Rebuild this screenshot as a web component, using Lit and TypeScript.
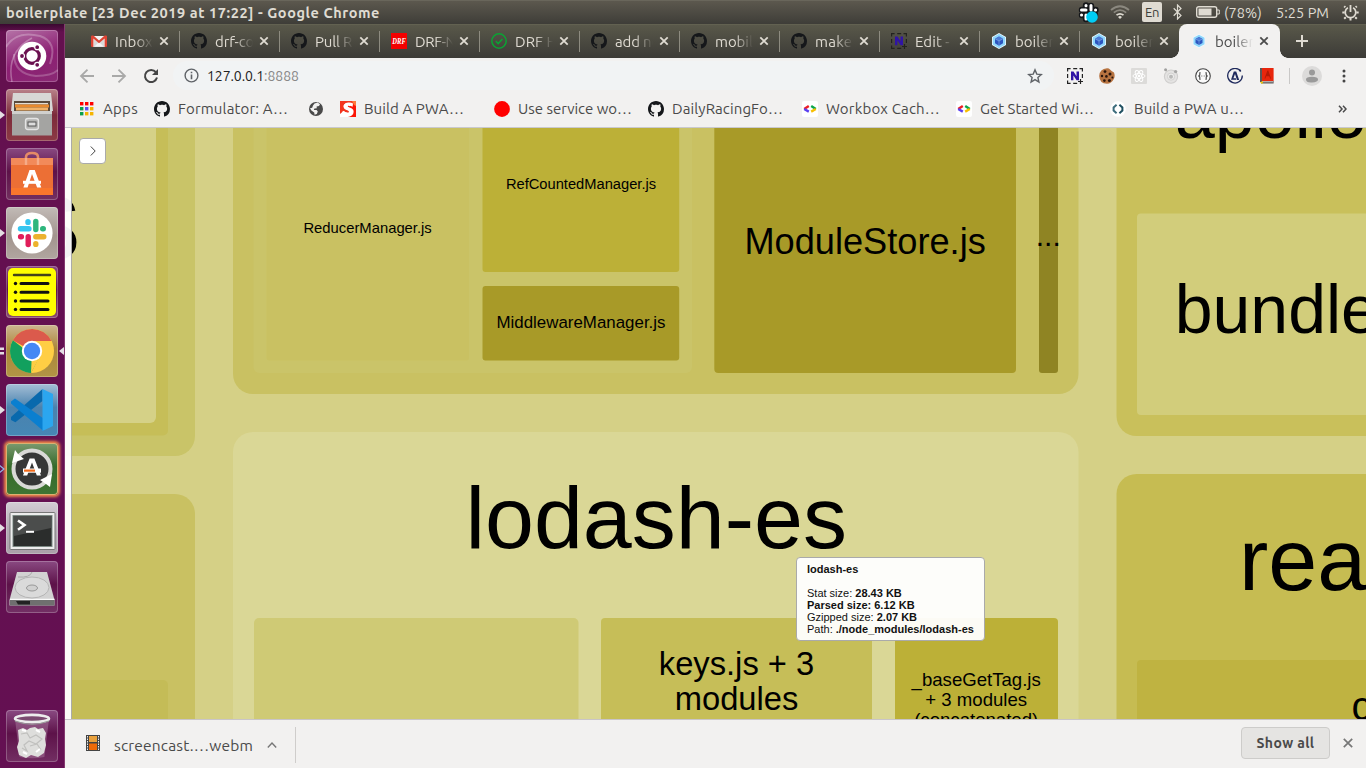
import { LitElement, html, svg, css, nothing, TemplateResult } from "lit";
import { customElement, property } from "lit/decorators.js";

/** A line of text whose tracking is adjusted so that it spans a given width. */
@customElement("fit-text")
class FitText extends LitElement {
  @property({ type: Number }) width = 0;
  @property() text = "";
  static styles = css`
    :host { display: inline-block; white-space: pre; flex: none; }
    .t { display: inline-block; white-space: pre; }
  `;
  render() {
    return html`<span class="t">${this.text}</span>`;
  }
  updated() {
    const t = this.renderRoot.querySelector(".t") as HTMLElement;
    t.style.letterSpacing = "0";
    const natural = t.getBoundingClientRect().width;
    const gap = (this.width - natural) / this.text.length;
    t.style.letterSpacing = `${gap.toFixed(3)}px`;
  }
}

const fit = (text: string, width: number) => html`<fit-text .text=${text} .width=${width}></fit-text>`;

const OCTOCAT =
  "M8 0C3.58 0 0 3.58 0 8c0 3.54 2.29 6.53 5.47 7.59.4.07.55-.17.55-.38 0-.19-.01-.82-.01-1.49-2.01.37-2.53-.49-2.69-.94-.09-.23-.48-.94-.82-1.13-.28-.15-.68-.52-.01-.53.63-.01 1.08.58 1.23.82.72 1.21 1.87.87 2.33.66.07-.52.28-.87.51-1.07-1.78-.2-3.64-.89-3.64-3.95 0-.87.31-1.59.82-2.15-.08-.2-.36-1.02.08-2.12 0 0 .67-.21 2.2.82.64-.18 1.32-.27 2-.27s1.36.09 2 .27c1.53-1.04 2.2-.82 2.2-.82.44 1.1.16 1.92.08 2.12.51.56.82 1.27.82 2.15 0 3.07-1.87 3.75-3.65 3.95.29.25.54.73.54 1.48 0 1.07-.01 1.93-.01 2.2 0 .21.15.46.55.38A8.01 8.01 0 0 0 16 8c0-4.42-3.58-8-8-8z";

const icon16 = (body: unknown) => html`<svg class="i16" viewBox="0 0 16 16">${body}</svg>`;

const github = () => icon16(svg`<path fill="#15171a" d=${OCTOCAT}></path>`);
const gmail = () =>
  icon16(svg`<path fill="#f2f2f2" d="M1 3h14v11H1z"></path><path fill="#d9d9d9" d="M3 14V6l5 4 5-4v8z"></path>
    <path fill="#f5f5f5" d="M3.5 13.5 8 9l4.5 4.5z"></path>
    <path fill="#dd4333" d="M1 2.6h1.4L8 7.4l5.6-4.8H15q1 0 1 1V13q0 1-1 1h-1.4V5.6L8 10.3 2.4 5.6V14H1q-1 0-1-1V3.6q0-1 1-1z"></path>`);
const drf = () =>
  icon16(svg`<rect width="16" height="16" fill="#f40000"></rect>
    <text x="1.3" y="10.8" font-family="Liberation Serif, serif" font-style="italic" font-weight="700" font-size="7.6" fill="#fff" textLength="13.6" lengthAdjust="spacingAndGlyphs">DRF</text>`);
const check = () =>
  icon16(svg`<circle cx="8" cy="8" r="7.2" fill="none" stroke="#0ba334" stroke-width="1.5"></circle>
    <path d="M4.8 8.2 7.2 10.5 11.4 6" fill="none" stroke="#0ba334" stroke-width="1.6"></path>`);
const nimbus = (frame = "#222") =>
  icon16(svg`<path d="M.6 3.5V.6h3M6.2.6h4M12.5.6h2.9v3M15.4 6v4M.6 6v4M.6 12.5v2.9h3M6.2 15.4h4" fill="none" stroke=${frame} stroke-width="1.2"></path>
    <path d="M4 12.2V3.6h2.5l3 4.7V3.6H12v8.6H9.6L6.4 7.4v4.8z" fill="#3014a5"></path>
    <path d="M11 13.5h5M13.5 11v5" stroke=${frame} stroke-width="1.2"></path>`);
const webpack = () =>
  icon16(svg`<path d="M8 0 15 4v8L8 16 1 12V4z" fill="#f4fbff"></path><path d="M8 .8 14.3 4.4v7.2L8 15.2 1.7 11.6V4.4z" fill="#8ed6fb"></path>
    <path d="M8 3.4 12 5.700v4.600L8 12.700 4 10.300V5.700z" fill="#2c55c0"></path>
    <path d="M8 3.4 12 5.700 8 8 4 5.700z" fill="#4b7bd6"></path><path d="M8 8v4.5M8 8 4.1 5.8M8 8l3.9-2.2" stroke="#b9e4fd" stroke-width=".4"></path>`);
const apps = () => {
  const c = ["#f00", "#f00", "#f00", "#0a9f4b", "#5a50ee", "#f5b400", "#0a9f4b", "#f5b400", "#f5b400"];
  return icon16(c.map((f, i) => svg`<rect x=${1 + (i % 3) * 5} y=${1 + Math.floor(i / 3) * 5} width="3.4" height="3.4" fill=${f}></rect>`));
};
const globe = () =>
  icon16(svg`<circle cx="8" cy="8" r="7" fill="#4a4a4a"></circle>
    <path d="M6.5 2.6 9.6 1.6 12 3.2 11 5 8.6 5.4 8.8 7.2 6.4 7.6 5.8 9H8.6L9.8 10.4 8.8 13 6.6 13.8 6.2 11.4 3.4 9.6 2 7.2 4.2 6.8 5 4.4z" fill="#f2f1f0"></path>`);
const smashing = () =>
  icon16(svg`<path d="M0 0H16V16H0z" fill="#fff"></path><path d="M0 0H16L13 5.800 12.400 3.200Q8.500 1 5.600 2.600 2.400 4.800 4.600 7.400 5.600 8.400 8.600 9.200 10.200 10 9 11.400 6.800 12.600 3.600 10L0 13z" fill="#f3351f"></path>
    <path d="M9.800 5.200Q8 4 7.600 5.200 8 6.200 11 7 14.400 8.600 13.400 12.200 12 15.400 8 16H16V0z" fill="#fb1606"></path><path d="M12 0h4v5l-2-1z" fill="#ff7a3c"></path>
    <path d="M13 2.400 12.600 5.800Q9 4 7.400 4.800 6.800 6 10 7.200 13.800 8.600 12.800 12 11.400 15 7 14.800 4 14.600 1.400 13L3 9.800Q6.800 12.400 8.800 11.400 9.600 10 6.600 9 3 7.800 3.600 4.600 5 1.200 9 1.400 11.400 1.600 13 2.400z" fill="#fff"></path>`);
const youtubeDot = () => icon16(svg`<circle cx="8" cy="8" r="7.9" fill="#f00"></circle>`);
const devsite = () =>
  icon16(svg`<rect width="16" height="16" rx="2" fill="#fff"></rect>
    <g fill="none" stroke-width="2.4"><path d="M6.8 5 2.200 8" stroke="#ee1d23"></path><path d="M2.200 8 6.8 10.600" stroke="#5a3ff0"></path>
    <path d="M9.2 5 13.800 8" stroke="#0aa64b"></path><path d="M13.800 8 9.2 10.600" stroke="#f7bf00"></path></g>`);
const codelab = () =>
  icon16(svg`<circle cx="8" cy="8" r="7.8" fill="#fff"></circle><path d="M6.6 3.8 3.6 6.400v3.200l3 2.600" fill="none" stroke="#3d6c7c" stroke-width="2"></path><path d="M9.4 3.8 12.4 6.400v3.200l-3 2.600" fill="none" stroke="#1f4f60" stroke-width="2"></path>`);
const cookie = () =>
  icon16(svg`<path d="M8 .3Q10 .2 11 1.6L12.6 3 15 4.4Q16.4 8 14.8 11 12.4 15.8 8 15.8.4 15.4.2 8 .6.8 8 .3z" fill="#b77340"></path>
    <g fill="#2a160d"><circle cx="6" cy="3.6" r="1.4"></circle><circle cx="11" cy="6" r="1.5"></circle><circle cx="3" cy="8" r="1.2"></circle><circle cx="7.4" cy="8.4" r="1.3"></circle><circle cx="5.4" cy="12.6" r="1.3"></circle><circle cx="10.4" cy="12.4" r="1.5"></circle><circle cx="13.4" cy="9.4" r="1"></circle></g>`);
const reactExt = () =>
  icon16(svg`<rect width="16" height="16" rx="1" fill="#dcdbd9"></rect><g fill="none" stroke="#fff" stroke-width="1"><ellipse cx="8" cy="8" rx="6" ry="2.4"></ellipse><ellipse cx="8" cy="8" rx="6" ry="2.4" transform="rotate(60 8 8)"></ellipse><ellipse cx="8" cy="8" rx="6" ry="2.4" transform="rotate(120 8 8)"></ellipse></g><circle cx="8" cy="8" r="1.3" fill="#fff"></circle>`);
const orbit = () =>
  icon16(svg`<circle cx="8" cy="8.6" r="6.6" fill="#e4e3e2" stroke="#cfcecd" stroke-width="1.1"></circle><circle cx="8" cy="8.6" r="3.6" fill="#ededec" stroke="#d2d1d0"></circle><circle cx="8" cy="8.8" r="2" fill="#b9b9b8"></circle><circle cx="2.6" cy="1.8" r="1.5" fill="#a0a09f"></circle><circle cx="12.6" cy="3.6" r="1.7" fill="#a6a6a5"></circle>`);
const braces = () =>
  icon16(svg`<circle cx="8" cy="8" r="7.3" fill="#fafafa" stroke="#444" stroke-width="1.1"></circle>
    <path d="M5.600 4.800H4.800V7L3.800 8l1 1v2.200h.8M10.400 4.800h.8V7l1 1-1 1v2.200h-.8" fill="none" stroke="#444" stroke-width="1.100"></path><path d="M6.300 7.600h1v1h-1zM8.700 7.600h1v1h-1z" fill="#666"></path>`);
const apollo = () =>
  icon16(svg`<path d="M13.9 3.4A7.3 7.3 0 1 0 15.3 7.6" fill="none" stroke="#1f2a5c" stroke-width="1.3"></path><circle cx="13" cy="2.6" r="1" fill="#1f2a5c"></circle>
    <path d="M6.8 3.6h2.4L12.2 12H10l-2-6-1.6 4.2H8.8l.5 1.6H4z" fill="#1f2a5c"></path>`);
const book = () =>
  icon16(svg`<path d="M1 0h13.600v13H1z" fill="#e8260c"></path><path d="M1 0h2v14H1z" fill="#5b5757"></path><path d="M2 13h12.6v2.5H2z" fill="#5f5a5a"></path><path d="M3 13.4h11v.8H3z" fill="#e6e6e6"></path><path d="M1 14.6 3.6 13v3z" fill="#ffd400"></path><path d="M8.4 2.600h.9L12 10.400h-.9l-.8-2.200H7.2l-.8 2.200H5.500z" fill="#b51a05"></path>`);

interface Tab { title: string; width: number; icon: () => TemplateResult; active?: boolean; }
const TABS: Tab[] = [
  { title: "Inbox (", width: 46, icon: gmail },
  { title: "drf-com", width: 52, icon: github },
  { title: "Pull Req", width: 54, icon: github },
  { title: "DRF-Nex", width: 56, icon: drf },
  { title: "DRF Ho", width: 51, icon: check },
  { title: "add new", width: 56, icon: github },
  { title: "mobile", width: 46, icon: github },
  { title: "make s", width: 48, icon: github },
  { title: "Edit - N", width: 49, icon: () => nimbus("#23231f") },
  { title: "boilerp", width: 48, icon: webpack },
  { title: "boilerp", width: 48, icon: webpack },
  { title: "boilerp", width: 48, icon: webpack, active: true },
];

interface Bookmark { label: string; width: number; slot: number; icon: () => TemplateResult; }
const BOOKMARKS: Bookmark[] = [
  { label: "Apps", width: 35, slot: 75, icon: apps },
  { label: "Formulator: A…", width: 110, slot: 154, icon: github },
  { label: "", width: 0, slot: 32, icon: globe },
  { label: "Build A PWA…", width: 100, slot: 154, icon: smashing },
  { label: "Use service wo…", width: 114, slot: 154, icon: youtubeDot },
  { label: "DailyRacingFo…", width: 111, slot: 154, icon: github },
  { label: "Workbox Cach…", width: 114, slot: 154, icon: devsite },
  { label: "Get Started Wi…", width: 114, slot: 154, icon: devsite },
  { label: "Build a PWA u…", width: 110, slot: 154, icon: codelab },
];

/* ---------- launcher artwork, drawn on a 52 × 52 tile ---------- */
const art = {
  dash: svg`<g fill="none" stroke="#fff"><path d="M0 17Q10 0 34 6 52 12 44 34" opacity=".25" stroke-width="2"></path><path d="M6 52Q0 22 26 8" opacity=".3" stroke-width="1.5"></path><path d="M8 24Q8 44 30 46 46 46 52 40" opacity=".22" stroke-width="2"></path></g>
    <circle cx="26" cy="26" r="14.3" fill="#fff"></circle><circle cx="26" cy="26" r="7.3" fill="none" stroke="#6b1050" stroke-width="3.2"></circle>
    <g stroke="#fff" stroke-width="1.2" fill="#6b1050"><circle cx="16" cy="26" r="2.5"></circle><circle cx="31.2" cy="17.2" r="2.5"></circle><circle cx="31.2" cy="34.8" r="2.5"></circle></g>`,
  files: svg`<path d="M7 4h38l2 18H5z" fill="#d7d7d5"></path><path d="M8 12h36v11H8z" fill="#5a4a3c"></path><path d="M9 14h33v1.600H9z" fill="#e2ddd5"></path><path d="M9 15.500h34v3H9z" fill="#e98a2e"></path><path d="M10 18.500h32v3H10z" fill="#f2b268"></path>
    <path d="M6 22h40v24.5H6z" fill="#a4a4a2"></path><path d="M6 22h40v3H6z" fill="#d0d0ce"></path><rect x="19.500" y="29.500" width="13" height="11" rx="2.5" fill="#b5b5b3" stroke="#e4e4e4" stroke-width="1.3"></rect><rect x="22" y="33" width="8" height="4" fill="#ddd" stroke="#555"></rect>`,
  software: svg`<path d="M20 17V9q0-4 6-4t6 4v8" fill="none" stroke="#e58a66" stroke-width="2.6"></path><path d="M5 10h42v37H5z" fill="#ec6f35"></path><path d="M5 10h42v7H5z" fill="#f28a5a"></path><path d="M5 40h42v7H5z" fill="#f9762c"></path><path d="M20 10v7M32 10v7" stroke="#f6ab88" stroke-width="2.400"></path>
    <path d="M23.5 22h5.2l6.6 17.5h-4.2L26 26l-4.4 13.5h-4.2z" fill="#fff"></path><path d="M17 32.8h18v3H17z" fill="#fff"></path>`,
  slack: svg`<circle cx="26" cy="26" r="20.6" fill="#fff"></circle>
    <g stroke-width="5.4" stroke-linecap="round"><path d="M14.5 21.8h8.4" stroke="#36c5f0"></path><path d="M22 14.6v.8" stroke="#36c5f0"></path><path d="M29.8 14.4v8.2" stroke="#2eb67d"></path><path d="M36.7 21.8h.6" stroke="#2eb67d"></path>
    <path d="M29.8 29.8h8" stroke="#ecb22e"></path><path d="M29.8 36.8v.6" stroke="#ecb22e"></path><path d="M22.2 29.8v7.8" stroke="#e01e5a"></path><path d="M14.6 29.8h.8" stroke="#e01e5a"></path></g>`,
  notes: svg`<rect x="2" y="2" width="48" height="48" rx="5" fill="#ff0"></rect><g stroke="#111" stroke-linecap="round" stroke-width="3"><path d="M8 9h36" stroke="#44441a" stroke-width="2.4"></path><path d="M15 17.5h27M15 26.3h27M15 35h27M15 43.4h27"></path></g>
    <g fill="#111"><circle cx="9.5" cy="17.5" r="1.7"></circle><circle cx="9.5" cy="26.3" r="1.7"></circle><circle cx="9.5" cy="35" r="1.7"></circle><circle cx="9.5" cy="43.4" r="1.7"></circle></g>`,
  chrome: svg`<circle cx="26" cy="26" r="22" fill="#ffce44"></circle><path d="M26 26 6.8 15.2A22 22 0 0 1 45.6 16H26z" fill="#db5a4c"></path>
    <path d="M26 26H46.2A22 22 0 0 0 45.6 16H26z" fill="#ffce44"></path><path d="M6.9 15.2A22 22 0 0 0 25 48l9-17.4-8-.6z" fill="#12a05e"></path><path d="M25 48 34.6 30.5 26 26z" fill="#ffce44"></path><circle cx="26" cy="26" r="10.2" fill="#fff"></circle><circle cx="26" cy="26" r="8.2" fill="#4688f4"></circle>`,
  code: svg`<path d="M36.500 15v22L5 36.500V33z" fill="#4686b5" opacity="0"></path><path d="M36.500 5 5 33v3l4.400 2.200L36.500 17z" fill="#0869ad"></path><path d="M5 17.500 9 14.500l28.500 20V47L5 19.600z" fill="#0a7fd0"></path><path d="M36.5 5 47 10v32l-10.500 5z" fill="#2ba6ef"></path>`,
  updater: svg`<circle cx="26" cy="26" r="18.500" fill="#363737" stroke="#d9d9d7" stroke-width="4"></circle><path d="M6 20 9 7l3 4 6 5z" fill="#fff"></path><path d="m46 31-2 13-4-3-6-4z" fill="#fff"></path>
    <path d="M23.600 15.500h4.800L35 32.500h-4.200L26 19.500l-4.800 13H17z" fill="#fff"></path><path d="M17 25.500h18v4.200H17z" fill="#fff"></path><path d="M18 26.500h11v2.200H18z" fill="#f26a1b"></path>`,
  terminal: svg`<rect x="4" y="10.500" width="45" height="37" rx="1" fill="#ededed" stroke="#777" stroke-width="1"></rect><rect x="7" y="13.500" width="39" height="31" fill="#2b2d2c" stroke="#7d8a84"></rect><path d="M8 14h37v12L8 34z" fill="#4b4d4c"></path><path d="m12 18.500 6.500 4.600-6.500 4.600" fill="none" stroke="#fff" stroke-width="2.600"></path><path d="M20 29.800h8" stroke="#fff" stroke-width="2"></path>`,
  disk: svg`<path d="M11 11h30l7.500 28v5.500h-45V39z" fill="#d2d2d2"></path><path d="M4 39h44.500v5.500H4z" fill="#6f6f6f"></path><path d="M10 40h14v3.500H12z" fill="#222"></path><path d="M4 38.400h44.500" stroke="#fafafa" stroke-width="1.200"></path><ellipse cx="26" cy="26.500" rx="17" ry="10.500" fill="#dadada" stroke="#b5b5b5"></ellipse><ellipse cx="26" cy="27" rx="5.500" ry="3" fill="#d0d0d0" stroke="#999"></ellipse><path d="M12 16q12 1 14-5" fill="none" stroke="#aaa"></path>`,
  trash: svg`<path d="M9 9h34l-4.600 38q-12.400 2.500-24.800 0z" fill="#b88fae" opacity=".4"></path><path d="m12 20 5-2 4 2 3-2 5-1 3 2 5-1 3 5-1 6 1 6-2 8-6 4-7-2-5 3-7-3-2-8 2-6z" fill="#dededc"></path>
    <path d="m15 24 6-1 3 5 6-3 6 4-6 5-7-3-5 4 3 6-5-3M24 36l7-2 4 6" fill="none" stroke="#c0c0be" stroke-width="1.200"></path><path d="M16 20l4 1M30 20l4 2M30 42l4-3M17 42l4 2" stroke="#fff" stroke-width="2"></path>
    <ellipse cx="26" cy="8.500" rx="17" ry="3.600" fill="#7b4a70" stroke="#ededed" stroke-width="2.600"></ellipse><path d="M9 11q17 6.500 34 0" fill="none" stroke="#999" stroke-width="1.200"></path>`,
};

type Mark = "left" | "double" | "hollow" | "none";
interface Launch { key: keyof typeof art; tint: string; mark: Mark; focused?: boolean; }
const LAUNCHERS: Launch[] = [
  { key: "dash", tint: "linear-gradient(160deg,#b674a8,#8c1f73 55%,#8a2a74)", mark: "none" },
  { key: "files", tint: "linear-gradient(#b9828a,#7c2a3a 50%,#8c3a45)", mark: "left" },
  { key: "software", tint: "linear-gradient(#8a4a82,#5d1249 45%,#732f60)", mark: "none" },
  { key: "slack", tint: "linear-gradient(#c2bbb7,#a2948e 55%,#b1a6a0)", mark: "left" },
  { key: "notes", tint: "linear-gradient(#8a4a82,#5d1249 45%,#8a4a70)", mark: "none" },
  { key: "chrome", tint: "linear-gradient(#cdb690,#ab873a 45%,#b29545)", mark: "double" },
  { key: "code", tint: "linear-gradient(#a5bfd6,#4a82ae 45%,#4687b5)", mark: "left" },
  { key: "updater", tint: "linear-gradient(#7b9a6f,#356a2b 45%,#3f7533)", mark: "hollow", focused: true },
  { key: "terminal", tint: "linear-gradient(#d3cdd4,#b5adb6 50%,#aba0aa)", mark: "left" },
  { key: "disk", tint: "linear-gradient(#8a4a82,#5d1249 45%,#733065)", mark: "none" },
];
const TRASH: Launch = { key: "trash", tint: "linear-gradient(#8a4a82,#5d1249 45%,#732f63)", mark: "none" };

@customElement("unity-launcher")
class UnityLauncher extends LitElement {
  static styles = css`
    :host { box-sizing: border-box; width: 65px; display: flex; flex-direction: column; gap: 7px; padding: 6px 0 6px 6px;
      background: linear-gradient(#3a0830, #64104f 8px, #641052); border-right: 1px solid #84396f; }
    .tile { position: relative; width: 52px; height: 52px; flex: none; border-radius: 4px; box-shadow: inset 0 0 0 1px #ffffff3c; }
    .focused { box-shadow: 0 0 3px 1.500px #f0894a, inset 0 0 0 1px #dcb070; }
    svg { display: block; width: 52px; height: 52px; }
    .spacer { flex: 1; }
    .mark { position: absolute; width: 5px; height: 10px; left: -6px; top: 21px; }
    .here { left: 53px; }
  `;
  private mark(m: Mark) {
    if (m === "none") return nothing;
    if (m === "hollow") return html`<svg class="mark" viewBox="0 0 5 10"><path d="M-1 1 4 5-1 9" fill="none" stroke="#8fb8e8" stroke-width="1.200"></path></svg>`;
    if (m === "double") return html`<svg class="mark" viewBox="0 0 5 10"><path d="M0 1.500h4v2.500H0zM0 6h4v2.500H0z" fill="#e4dfe3"></path></svg>
      <svg class="mark here" viewBox="0 0 5 10"><path d="M5 1v8L0 5z" fill="#e4dfe3"></path></svg>`;
    return html`<svg class="mark" viewBox="0 0 5 10"><path d="M0 1v8l5-4z" fill="#e4dfe3"></path></svg>`;
  }
  private tile(l: Launch) {
    return html`<div class="tile ${l.focused ? "focused" : ""}" style="background:${l.tint}">
      <svg viewBox="0 0 52 52">${art[l.key]}</svg>${this.mark(l.mark)}</div>`;
  }
  render() {
    return html`${LAUNCHERS.map((l) => this.tile(l))}<div class="spacer"></div>${this.tile(TRASH)}`;
  }
}

/* ---------- bundle treemap: coordinates are canvas pixels ---------- */
type Box = [x: number, y: number, w: number, h: number, r: number, fill: string];
const BOXES: Box[] = [
  [-60, -60, 190, 388, 20, "#c9c468"], [-60, -60, 163, 367.500, 5, "#c6be58"], [-60, -60, 151, 355, 6, "#d5d187"],
  [-60, 366, 190, 400, 20, "#c9c162"], [-60, 552, 163, 300, 5, "#c4bc57"],
  [168, -60, 845.500, 326, 20, "#c9c162"], [188.500, -60, 438.500, 305, 6, "#cac469"], [201.500, -60, 202.500, 292.500, 3, "#c9c162"],
  [417.500, -60, 196.700, 204, 3, "#bcb037"], [417.500, 158, 196.700, 74.500, 3, "#a89a28"],
  [649.300, -60, 301.700, 305, 4, "#a89a28"], [974, -60, 19, 305, 3, "#8f8423"],
  [168, 304, 845.500, 400, 20, "#dad796"], [189, 490, 324.500, 200, 5, "#cfca75"], [536, 490, 271, 200, 4, "#c6be58"], [830, 490, 163, 200, 4, "#bcb037"],
  [1051.500, -60, 400, 368, 20, "#c9c05b"], [1072, 85.500, 400, 201.500, 4, "#d2cd7b"],
  [1051.500, 346, 400, 400, 20, "#c6bc52"], [1072, 532, 400, 300, 4, "#bfb341"],
];
type Label = [text: string, x: number, y: number, size: number, anchor: "start" | "middle" | "end"];
const LABELS: Label[] = [
  ["ReducerManager.js", 302.600, 105.300, 14.800, "middle"],
  ["RefCountedManager.js", 516, 61, 14.700, "middle"],
  ["MiddlewareManager.js", 516, 200.300, 16.900, "middle"],
  ["ModuleStore.js", 800.100, 125.700, 36.200, "middle"],
  ["...", 983.300, 117.700, 30, "middle"],
  ["lodash-es", 591.200, 419.500, 88, "middle"],
  ["keys.js + 3", 671.500, 547, 32.700, "middle"],
  ["modules", 671.500, 581.700, 32.700, "middle"],
  ["_baseGetTag.js", 911.200, 557.700, 18.600, "middle"],
  ["+ 3 modules", 911.200, 577.700, 18.600, "middle"],
  ["(concatenated)", 911.200, 597.700, 18.600, "middle"],
  ["apollo-", 1109.700, 10, 72, "start"],
  ["bundle", 1109.700, 204.700, 68, "start"],
  ["rea", 1174, 461.700, 88, "start"],
  ["c", 1286.500, 592, 40, "start"],
  ["s", 15.700, 132, 120, "end"],
];

@customElement("bundle-treemap")
class BundleTreemap extends LitElement {
  static styles = css`
    :host { position: relative; display: block; overflow: hidden; background: #d5d086; font-family: "Liberation Sans", Arial, sans-serif; }
    .map { display: block; width: 1301px; height: 591px; }
    .side { position: absolute; inset: 0 auto 0 0; box-sizing: border-box; width: 7px; background: #fffffff2; border-right: 1px solid #aaa; }
    .toggle { position: absolute; left: 14px; top: 10px; box-sizing: border-box; width: 27px; height: 26px; border: 1px solid #aaa; border-radius: 4px; background: #fff; display: grid; place-items: center; }
    .toggle svg { width: 6px; height: 10px; }
    .tip { position: absolute; left: 731px; top: 429px; box-sizing: border-box; width: 189px; height: 84px; padding: 5px 10px; border: 1px solid #aaa; border-radius: 4px; background: #fffffff2; font-size: 11px; line-height: 12px; color: #111; white-space: nowrap; }
    .tip .gap { height: 12px; }
  `;
  render() {
    return html`
      <svg class="map" viewBox="0 0 1301 591">
        ${BOXES.map(([x, y, w, h, r, fill]) => svg`<rect x=${x} y=${y} width=${w} height=${h} rx=${r} fill=${fill}></rect>`)}
        ${LABELS.map(([t, x, y, s, a]) => svg`<text x=${x} y=${y} font-size=${s} text-anchor=${a}>${t}</text>`)}
      </svg>
      <div class="side"></div>
      <div class="toggle"><svg viewBox="0 0 6 10"><path d="M.8.500 5.200 5 .8 9.500" fill="none" stroke="#444" stroke-width="1"></path></svg></div>
      <div class="tip"><div><b>lodash-es</b></div><div class="gap"></div>
        <div>Stat size: <b>28.43 KB</b></div><div><b>Parsed size: 6.12 KB</b></div>
        <div>Gzipped size: <b>2.07 KB</b></div><div>Path: <b>./node_modules/lodash-es</b></div></div>`;
  }
}

@customElement("app-root")
class AppRoot extends LitElement {
  static styles = css`
    :host { display: grid; grid-template: 24px 744px / 65px 1301px; width: 1366px; height: 768px; overflow: hidden; font-family: Ubuntu, "Noto Sans", sans-serif; font-size: 15px; color: #4a4a4a; }
    svg { display: block; flex: none; }
    .i16 { width: 16px; height: 16px; }
    .panel { grid-column: 1 / 3; display: flex; align-items: center; box-sizing: border-box; padding: 0 7px 1px 6px; background: linear-gradient(#5c584e, #3e3d38); border-top: 1px solid #69665b; color: #dfdbd2; font-size: 14.500px; }
    .title { font-weight: 700; flex: 1; }
    .en { width: 20px; height: 20px; border-radius: 2px; background: #dfdbd2; color: #403f3a; display: grid; place-items: center; font-size: 13px; margin-right: 11px; }
    .slack { width: 21px; height: 21px; margin-right: 11px; }
    .wifi { width: 20px; height: 14px; margin-right: 12px; }
    .bt { width: 9px; height: 16px; margin-right: 14px; }
    .bat { width: 24px; height: 12px; margin-right: 4px; }
    .clock { margin: 0 13px 0 14px; }
    .power { width: 17px; height: 17px; }
    .chrome { display: grid; grid-template-rows: 34px 35px 35px 591px 49px; min-width: 0; }
    .tabs { display: flex; padding-left: 15px; background: linear-gradient(#6b6a58 0, #59584a 1px, #3c3b37); align-items: stretch; }
    .tab { box-sizing: border-box; width: 100px; flex: none; display: flex; align-items: center; padding-left: 11px; color: #dfdbd2; }
    .tab .i16 { margin-right: 8px; }
    .name { width: 38px; overflow: hidden; -webkit-mask-image: linear-gradient(90deg, #000 20px, transparent 38px); mask-image: linear-gradient(90deg, #000 20px, transparent 38px); }
    .x { width: 10px; height: 10px; margin-left: 6px; }
    .sep { width: 1px; height: 21px; align-self: center; background: #8d8b80; margin-left: 10px; }
    .tab.active { position: relative; width: 101px; margin-left: -1px; padding-left: 12px; color: #4c4c4c; background: #f2f1f0; border-radius: 8px 8px 0 0; }
    .tab.active .i16 { width: 14px; height: 14px; margin: 0 9px 0 1px; }
    .tab.active::before, .tab.active::after { content: ""; position: absolute; bottom: 0; width: 8px; height: 8px; }
    .tab.active::before { left: -8px; background: radial-gradient(circle at 0 0, transparent 7.500px, #f2f1f0 8px); }
    .tab.active::after { right: -8px; background: radial-gradient(circle at 100% 0, transparent 7.500px, #f2f1f0 8px); }
    .plus { width: 12px; height: 12px; align-self: center; margin-left: 16px; }
    .bar { display: flex; align-items: center; background: #f2f1f0; padding: 0 16px 0 14px; gap: 16px; }
    .omni { display: flex; align-items: center; height: 29px; border-radius: 15px; background: #f1f3f4; flex: none; width: 881px; box-sizing: border-box; padding: 0 11px; gap: 8px; margin-left: -2px; }
    .url { display: flex; flex: 1; font-size: 14px; color: #222; }
    .port { color: #888; }
    .ext { display: flex; align-items: center; gap: 16px; margin-left: -3px; }
    .vsep { width: 1px; height: 16px; background: #c9c8c7; margin-left: -2px; }
    .avatar { width: 20px; height: 20px; margin: 0 -1px 0 -4px; }
    .dots { width: 4px; height: 14px; margin-left: 5px; }
    .marks { display: flex; align-items: center; box-sizing: border-box; background: #f2f1f0; border-bottom: 1px solid #c9c9cf; padding: 0 0 3px 14px; }
    .mk { display: flex; align-items: center; gap: 8px; flex: none; box-sizing: border-box; height: 22px; }
    .more { width: 9px; height: 8px; margin-left: 74px; }
    .shelf { display: flex; align-items: center; box-sizing: border-box; background: #f2f1f0; border-top: 1px solid #c9c5c9; padding: 2px 13px 0 21px; }
    .film { width: 14px; height: 16px; margin: -5px 14px 0 0; }
    .file { font-size: 15.500px; }
    .up { width: 10px; height: 6px; margin-left: 14px; }
    .bsep { width: 1px; height: 36px; margin-left: 18px; background: #cfcdcb; }
    .show { margin: -4px 13px 0 auto; box-sizing: border-box; width: 89px; height: 32px; border: 1px solid #cdccca; border-radius: 4px; background: #e5e4e2; display: grid; place-items: center; font-weight: 700; font-size: 14px; }
    .close { width: 10px; height: 10px; margin-top: -4px; }
  `;

  private panel() {
    return html`<header class="panel">
      <div class="title">${fit("boilerplate [23 Dec 2019 at 17:22] - Google Chrome", 374)}</div>
      <svg class="slack" viewBox="0 0 21 21"><g stroke="#15171a" stroke-width="6.400" stroke-linecap="round"><path d="M4 8h5M8 3.500V8M13 4v5M17.500 8H13M4 13h4M8 13v4M13 17v-4h4"></path></g><g stroke="#fff" stroke-width="3" stroke-linecap="round"><path d="M3.500 8H8M8 3.500v.2M13 3.500V8M17.500 8h.1M3.500 13h.1M8 13v4"></path></g><circle cx="14" cy="15" r="5.800" fill="#00cdf5"></circle></svg>
      <svg class="wifi" viewBox="0 0 20 14"><g fill="none" stroke-width="1.700"><path d="M1 5Q10-2.500 19 5" stroke="#8b887f"></path><path d="M3.800 7.600Q10 2.600 16.200 7.600" stroke="#8b887f"></path><path d="M6.500 10.200Q10 7.400 13.500 10.200" stroke="#dfdbd2"></path></g><path d="m8 12 2-1.300 2 1.300-2 2z" fill="#dfdbd2"></path></svg>
      <div class="en">${fit("En", 14)}</div>
      <svg class="bt" viewBox="0 0 9 16"><path d="M.7 4.300 8 11.500 4.500 15V1L8 4.500.7 11.700" fill="none" stroke="#dfdbd2" stroke-width="1.200"></path></svg>
      <svg class="bat" viewBox="0 0 24 12"><rect x=".7" y=".7" width="20" height="10.600" rx="2" fill="none" stroke="#dfdbd2" stroke-width="1.400"></rect><path d="M2.500 2.500h13v7h-13z" fill="#dfdbd2"></path><path d="M21 4h2.300v4H21" fill="none" stroke="#dfdbd2"></path></svg>
      ${fit("(78%)", 38)}<span class="clock">${fit("5:25 PM", 53)}</span>
      <svg class="power" viewBox="0 0 17 17"><g fill="none" stroke="#dfdbd2"><path d="M5.900 3.800a5.300 5.300 0 1 0 5.200 0" stroke-width="1.700"></path><path d="M8.500 1v7" stroke-width="1.800"></path><path d="M3.300 3.300 2.200 2.200M13.700 3.300l1.100-1.100M.3 8.500h2.400M14.300 8.500h2.400M3.800 13.200l-1.600 1.600M13.200 13.200l1.600 1.600M8.500 14v2.500" stroke-width="2"></path></g></svg>
    </header>`;
  }

  private tab(t: Tab, i: number) {
    const c = t.active ? "#4c4c4c" : "#dfdbd2";
    return html`<div class="tab ${t.active ? "active" : ""}">${t.icon()}<div class="name">${fit(t.title, t.width)}</div>
      <svg class="x" viewBox="0 0 10 10"><path d="m1.300 1.300 7.400 7.400M8.700 1.300 1.300 8.700" stroke=${c} stroke-width="1.800"></path></svg>
      ${i < TABS.length - 2 ? html`<div class="sep"></div>` : nothing}</div>`;
  }

  private toolbar() {
    return html`<div class="bar">
      <svg class="i16" viewBox="0 0 16 16"><path d="M15 8H2.500M8.500 1.600 2 8l6.500 6.400" fill="none" stroke="#a9a9a8" stroke-width="1.800"></path></svg>
      <svg class="i16" viewBox="0 0 16 16"><path d="M1 8h12.500M7.500 1.600 14 8l-6.500 6.400" fill="none" stroke="#a9a9a8" stroke-width="1.800"></path></svg>
      <svg class="i16" viewBox="0 0 16 16"><path d="M12.900 4.200A6.100 6.100 0 1 0 14 9.600" fill="none" stroke="#454545" stroke-width="2"></path><path d="M15 1v6H9z" fill="#454545"></path></svg>
      <div class="omni">
        <svg width="15" height="15" viewBox="0 0 15 15"><circle cx="7.500" cy="7.500" r="6.400" fill="none" stroke="#5f6368" stroke-width="1.400"></circle><path d="M6.700 6.500h1.600v4.800H6.700zM6.700 3.700h1.600v1.600H6.700z" fill="#5f6368"></path></svg>
        <div class="url">${fit("127.0.0.1", 57)}<span class="port">${fit(":8888", 35)}</span></div>
        <svg class="i16" viewBox="0 0 16 16"><path d="m8 1.900 1.800 4.200 4.500.4-3.400 3 1 4.500L8 11.600 4.100 14l1-4.500-3.400-3 4.500-.4z" fill="none" stroke="#5f6368" stroke-width="1.400"></path></svg>
      </div>
      <div class="ext">${nimbus()}${cookie()}${reactExt()}${orbit()}${braces()}${apollo()}${book()}</div>
      <div class="vsep"></div>
      <svg class="avatar" viewBox="0 0 20 20"><circle cx="10" cy="10" r="10" fill="#dcdbda"></circle><circle cx="10" cy="6.500" r="3" fill="#9a9a9a"></circle><path d="M4 13.400q0-2.600 6-2.600t6 2.600-6 3-6-3z" fill="#9a9a9a"></path></svg>
      <svg class="dots" viewBox="0 0 4 14"><circle cx="2" cy="2" r="1.500" fill="#454545"></circle><circle cx="2" cy="7" r="1.500" fill="#454545"></circle><circle cx="2" cy="12" r="1.500" fill="#454545"></circle></svg>
    </div>`;
  }

  render() {
    return html`${this.panel()}
      <unity-launcher></unity-launcher>
      <div class="chrome">
        <nav class="tabs">${TABS.map((t, i) => this.tab(t, i))}
          <svg class="plus" viewBox="0 0 12 12"><path d="M6 0v12M0 6h12" stroke="#dfdbd2" stroke-width="2"></path></svg></nav>
        ${this.toolbar()}
        <div class="marks">
          ${BOOKMARKS.map((b) => html`<div class="mk" style="width:${b.slot}px">${b.icon()}${b.label ? fit(b.label, b.width) : nothing}</div>`)}
          <svg class="more" viewBox="0 0 9 8"><path d="m1 .8 3 3.200-3 3.200M5 .8l3 3.200-3 3.200" fill="none" stroke="#4a4a4a" stroke-width="1.500"></path></svg>
        </div>
        <bundle-treemap></bundle-treemap>
        <footer class="shelf">
          <svg class="film" viewBox="0 0 14 16"><path d="M0 0h14v16H0z" fill="#444"></path><path d="M3 1h8v6H3z" fill="#e9a13c"></path><path d="M3 8.500h8V15H3z" fill="#ee6a08"></path><path d="M1.500 1v14M12.500 1v14" stroke="#eee" stroke-width="1" stroke-dasharray="1.500 1"></path></svg>
          <span class="file">${fit("screencast.…webm", 139)}</span>
          <svg class="up" viewBox="0 0 10 6"><path d="m.8 5.400 4.200-4.400 4.200 4.400" fill="none" stroke="#777" stroke-width="1.400"></path></svg>
          <div class="bsep"></div>
          <div class="show">${fit("Show all", 58)}</div>
          <svg class="close" viewBox="0 0 10 10"><path d="m.8.8 8.400 8.400M9.200.8.8 9.200" stroke="#777" stroke-width="1.700"></path></svg>
        </footer>
      </div>`;
  }
}
